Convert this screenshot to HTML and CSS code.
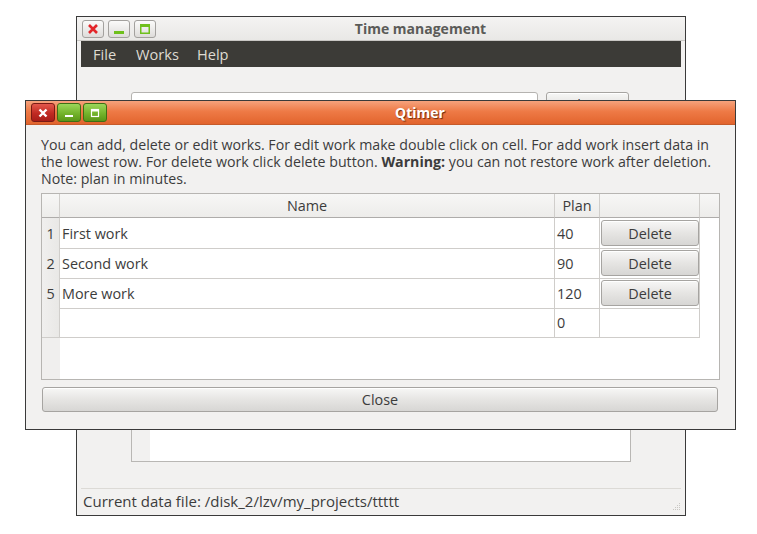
FILE: index.html
```html
<!DOCTYPE html>
<html>
<head>
<meta charset="utf-8">
<link rel="stylesheet" href="styles.css">
</head>
<body>
<div class="desktop">
  <div class="win main-win">
    <div class="titlebar light">
      <div class="wbtns">
        <span class="wb">
          <svg width="12" height="12" viewBox="0 0 12 12"><path d="M2 2L10 10M10 2L2 10" stroke="#e3262a" stroke-width="2.6" stroke-linecap="butt"/></svg>
        </span>
        <span class="wb">
          <svg width="12" height="12" viewBox="0 0 12 12"><rect x="1" y="8" width="10" height="3" fill="#6fc01c"/></svg>
        </span>
        <span class="wb">
          <svg width="12" height="12" viewBox="0 0 12 12"><rect x="1.75" y="1.75" width="8.5" height="8.5" fill="none" stroke="#6fc01c" stroke-width="1.5"/><rect x="1" y="1" width="10" height="3" fill="#6fc01c"/></svg>
        </span>
      </div>
      <div class="title">Time management</div>
    </div>
    <div class="menubar">
      <span class="menu-item">File</span>
      <span class="menu-item">Works</span>
      <span class="menu-item help">Help</span>
    </div>
    <div class="main-body">
      <div class="toprow">
        <div class="lineedit"></div>
        <div class="qbtn show-btn">Show</div>
      </div>
      <div class="list">
        <div class="list-gutter"></div>
        <div class="list-area"></div>
      </div>
    </div>
    <div class="statusbar">
      <span class="status-text">Current data file: /disk_2/lzv/my_projects/ttttt</span>
      <svg class="grip" width="10" height="10" viewBox="0 0 10 10">
        <g fill="#c9c7c3">
          <rect x="8" y="2" width="1" height="1"/>
          <rect x="6" y="4" width="1" height="1"/><rect x="8" y="4" width="1" height="1"/>
          <rect x="4" y="6" width="1" height="1"/><rect x="6" y="6" width="1" height="1"/><rect x="8" y="6" width="1" height="1"/>
          <rect x="2" y="8" width="1" height="1"/><rect x="4" y="8" width="1" height="1"/><rect x="6" y="8" width="1" height="1"/><rect x="8" y="8" width="1" height="1"/>
        </g>
      </svg>
    </div>
  </div>

  <div class="win dialog">
    <div class="titlebar orange">
      <div class="wbtns dlg-btns">
        <span class="wb red">
          <svg width="12" height="12" viewBox="0 0 12 12"><path d="M2.5 2.5L9.5 9.5M9.5 2.5L2.5 9.5" stroke="#fff" stroke-width="2.4"/></svg>
        </span>
        <span class="wb green">
          <svg width="12" height="12" viewBox="0 0 12 12"><rect x="2" y="8" width="8" height="2" fill="#fff"/></svg>
        </span>
        <span class="wb green">
          <svg width="12" height="12" viewBox="0 0 12 12"><rect x="2.5" y="2.5" width="7" height="7" fill="none" stroke="#fff" stroke-width="1.2"/><rect x="2" y="2" width="8" height="2.5" fill="#fff"/></svg>
        </span>
      </div>
      <div class="title">Qtimer</div>
    </div>
    <div class="dlg-body">
      <p class="info">You can add, delete or edit works. For edit work make double click on cell. For add work insert data in the lowest row. For delete work click delete button. <b>Warning:</b> you can not restore work after deletion. Note: plan in minutes.</p>
      <div class="table">
        <div class="trow head">
          <div class="hc corner"></div>
          <div class="hc">Name</div>
          <div class="hc">Plan</div>
          <div class="hc"></div>
          <div class="hc extra"></div>
        </div>
        <div class="trow">
          <div class="vh">1</div>
          <div class="td">First work</div>
          <div class="td">40</div>
          <div class="td btncell"><div class="qbtn del">Delete</div></div>
          <div class="tx"></div>
        </div>
        <div class="trow">
          <div class="vh">2</div>
          <div class="td">Second work</div>
          <div class="td">90</div>
          <div class="td btncell"><div class="qbtn del">Delete</div></div>
          <div class="tx"></div>
        </div>
        <div class="trow">
          <div class="vh">5</div>
          <div class="td">More work</div>
          <div class="td">120</div>
          <div class="td btncell"><div class="qbtn del">Delete</div></div>
          <div class="tx"></div>
        </div>
        <div class="trow">
          <div class="vh"></div>
          <div class="td"></div>
          <div class="td">0</div>
          <div class="td"></div>
          <div class="tx"></div>
        </div>
        <div class="tfill">
          <div class="fill-gutter"></div>
          <div class="fill-area"></div>
        </div>
      </div>
      <div class="qbtn close-btn">Close</div>
    </div>
  </div>
</div>
</body>
</html>
```

FILE: styles.css
```css
* { box-sizing: border-box; }
html, body { margin: 0; padding: 0; }
body {
  background: #ffffff;
  font-family: "Open Sans", "Noto Sans", sans-serif;
  font-size: 14.4px;
  color: #3c3c3c;
}
.desktop {
  position: relative;
  width: 757px;
  height: 534px;
  overflow: hidden;
}
.win {
  position: absolute;
  border: 1px solid #3a3a3a;
  background: #f2f1f0;
  display: flex;
  flex-direction: column;
}
.main-win {
  left: 76px;
  top: 16px;
  width: 610px;
  height: 500px;
}
.dialog {
  left: 25px;
  top: 100px;
  width: 711px;
  height: 330px;
}
.titlebar {
  height: 24px;
  flex: none;
  display: flex;
  align-items: center;
  position: relative;
}
.titlebar.light {
  background: linear-gradient(#f4f3f2, #e9e8e6);
  border-bottom: 1px solid #c9c7c4;
}
.titlebar.orange {
  background: linear-gradient(#f6a27c, #ee7a46 45%, #e2642d);
  border-bottom: 1px solid #c65a2a;
}
.wbtns {
  display: flex;
  gap: 4px;
  padding-left: 5px;
  width: 79px;
  flex: none;
}
.dlg-btns {
  padding-left: 5px;
  gap: 2px;
  width: 79px;
}
.wb {
  width: 22px;
  height: 18px;
  border-radius: 3px;
  border: 1px solid #a3a19e;
  background: linear-gradient(#fbfbfa, #dedcda);
  display: flex;
  align-items: center;
  justify-content: center;
  flex: none;
}
.dlg-btns .wb { width: 24px; height: 19px; }
.wb.red {
  border-color: #7a1a14;
  background: linear-gradient(#e4584c, #c02a22 55%, #a81d18);
}
.wb.green {
  border-color: #3f6e14;
  background: linear-gradient(#9cd65a, #74b42c 55%, #5a9618);
}
.title {
  flex: 1;
  text-align: center;
  font-weight: bold;
  font-size: 14px;
  color: #5b5b58;
}
.orange .title {
  color: #ffffff;
  text-shadow: 1px 1px 1px #6a2a10;
}
.menubar {
  margin: 0 4px;
  height: 26px;
  background: #3c3b37;
  display: flex;
  align-items: center;
  padding-left: 2px;
  flex: none;
}
.menu-item {
  color: #dfdbd2;
  font-size: 14.6px;
  padding: 0 10px;
}
.menu-item.help { margin-left: -2px; }
.main-body {
  flex: 1;
  padding: 25px 0 0 54px;
  display: flex;
  flex-direction: column;
  gap: 8px;
}
.toprow {
  display: flex;
  gap: 8px;
  height: 24px;
}
.lineedit {
  width: 407px;
  border: 1px solid #b5b3b0;
  border-radius: 3px;
  background: #fff;
}
.show-btn { width: 83px; }
.list {
  width: 500px;
  height: 338px;
  border: 1px solid #b9b7b4;
  display: flex;
}
.list-gutter { width: 18px; background: #f2f1f0; }
.list-area { flex: 1; background: #fff; }
.statusbar {
  margin: 0 4px 3px;
  height: 24px;
  border-top: 1px solid #dcdad6;
  display: flex;
  align-items: center;
  justify-content: space-between;
  padding-left: 2px;
  flex: none;
}
.status-text { font-size: 15px; }
.grip { align-self: flex-end; margin-bottom: 1px; }

.qbtn {
  border: 1px solid #a6a4a1;
  border-radius: 3px;
  background: linear-gradient(#f7f7f6, #e6e5e3 50%, #d7d6d4);
  display: flex;
  align-items: center;
  justify-content: center;
  color: #3c3c3c;
  box-shadow: inset 0 1px 0 #ffffff;
}

.dlg-body {
  flex: 1;
  padding: 11px 15px 16px 15px;
  display: flex;
  flex-direction: column;
}
.info {
  margin: 0 0 6px;
  line-height: 17px;
  font-size: 14.2px;
}
.info b { font-weight: bold; }
.table {
  width: 679px;
  height: 187px;
  border: 1px solid #b7b5b2;
  display: flex;
  flex-direction: column;
  background: #fff;
  flex: none;
}
.trow {
  display: grid;
  grid-template-columns: 18px 495px 45px 100px 1fr;
  height: 30px;
  flex: none;
}
.trow.head { height: 24px; }
.hc {
  background: linear-gradient(#f7f7f6, #edecea);
  border-right: 1px solid #d0cecb;
  border-bottom: 1px solid #aeacaa;
  display: flex;
  align-items: center;
  justify-content: center;
}
.hc.extra { border-right: none; }
.vh {
  background: linear-gradient(90deg, #f0efee, #e9e8e6);
  border-right: 1px solid #d0cecb;
  border-bottom: 1px solid #cfcdca;
  display: flex;
  align-items: center;
  justify-content: center;
}
.td {
  border-right: 1px solid #cfcdca;
  border-bottom: 1px solid #cfcdca;
  display: flex;
  align-items: center;
  padding-left: 2px;
}
.btncell { padding: 2px 0 2px 1px; align-items: stretch; }
.del { flex: 1; height: 26px; }
.tx { background: #fff; }
.tfill {
  flex: 1;
  display: grid;
  grid-template-columns: 18px 1fr;
}
.fill-gutter { background: #f0efee; }
.fill-area { background: #fff; }
.close-btn {
  margin-top: 7px;
  margin-left: 1px;
  width: 676px;
  height: 25px;
  flex: none;
}
```
